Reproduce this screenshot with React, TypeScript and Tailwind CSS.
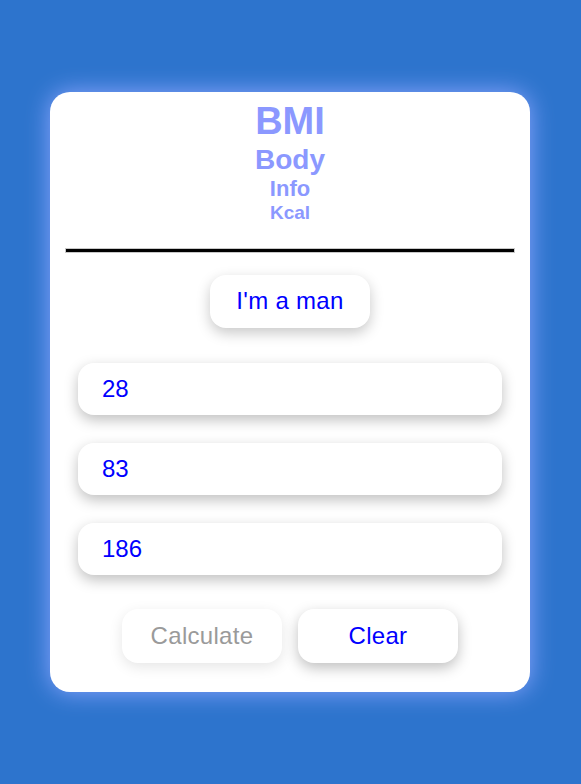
const fields = ['28', '83', '186'];

export default function App() {
  return (
    <div className="flex min-h-screen items-center bg-[#2d74cd] pl-[50px] font-['Liberation_Sans',Arial,sans-serif]">
      <div className="flex h-[600px] w-[480px] flex-col rounded-[20px] bg-white px-[15px] pt-[8px] shadow-[0_0_24px_rgba(140,165,255,1)]">
        <div className="flex flex-col items-center font-bold leading-[1.15] text-[#8b98ff]">
          <h1 className="text-[38px]">BMI</h1>
          <h2 className="text-[28px]">Body</h2>
          <h3 className="text-[22px]">Info</h3>
          <h4 className="text-[19px] leading-[1.25]">Kcal</h4>
        </div>

        <div className="mt-[23px] h-[5px] border border-[#c8c8c8] bg-black" />

        <div className="mt-[22px] flex justify-center">
          <button className="h-[53px] w-[160px] rounded-[16px] bg-white text-[24px] tracking-[0.3px] text-[#0000ff] shadow-[0_5px_14px_rgba(0,0,0,0.22)]">
            I'm a man
          </button>
        </div>

        <div className="mt-[35px] flex flex-col gap-[28px] px-[13px]">
          {fields.map((value) => (
            <div
              key={value}
              className="flex h-[52px] items-center rounded-[16px] bg-white px-[24px] text-[24px] text-[#0000ff] shadow-[0_5px_14px_rgba(0,0,0,0.25)]"
            >
              {value}
            </div>
          ))}
        </div>

        <div className="mt-[34px] flex justify-center gap-[16px]">
          <button className="h-[54px] w-[160px] rounded-[16px] bg-white text-[24px] tracking-[0.3px] text-[#9a9a9a] shadow-[0_4px_14px_rgba(0,0,0,0.1)]">
            Calculate
          </button>
          <button className="h-[54px] w-[160px] rounded-[16px] bg-white text-[24px] tracking-[0.3px] text-[#0000ff] shadow-[0_5px_14px_rgba(0,0,0,0.25)]">
            Clear
          </button>
        </div>
      </div>
    </div>
  );
}
